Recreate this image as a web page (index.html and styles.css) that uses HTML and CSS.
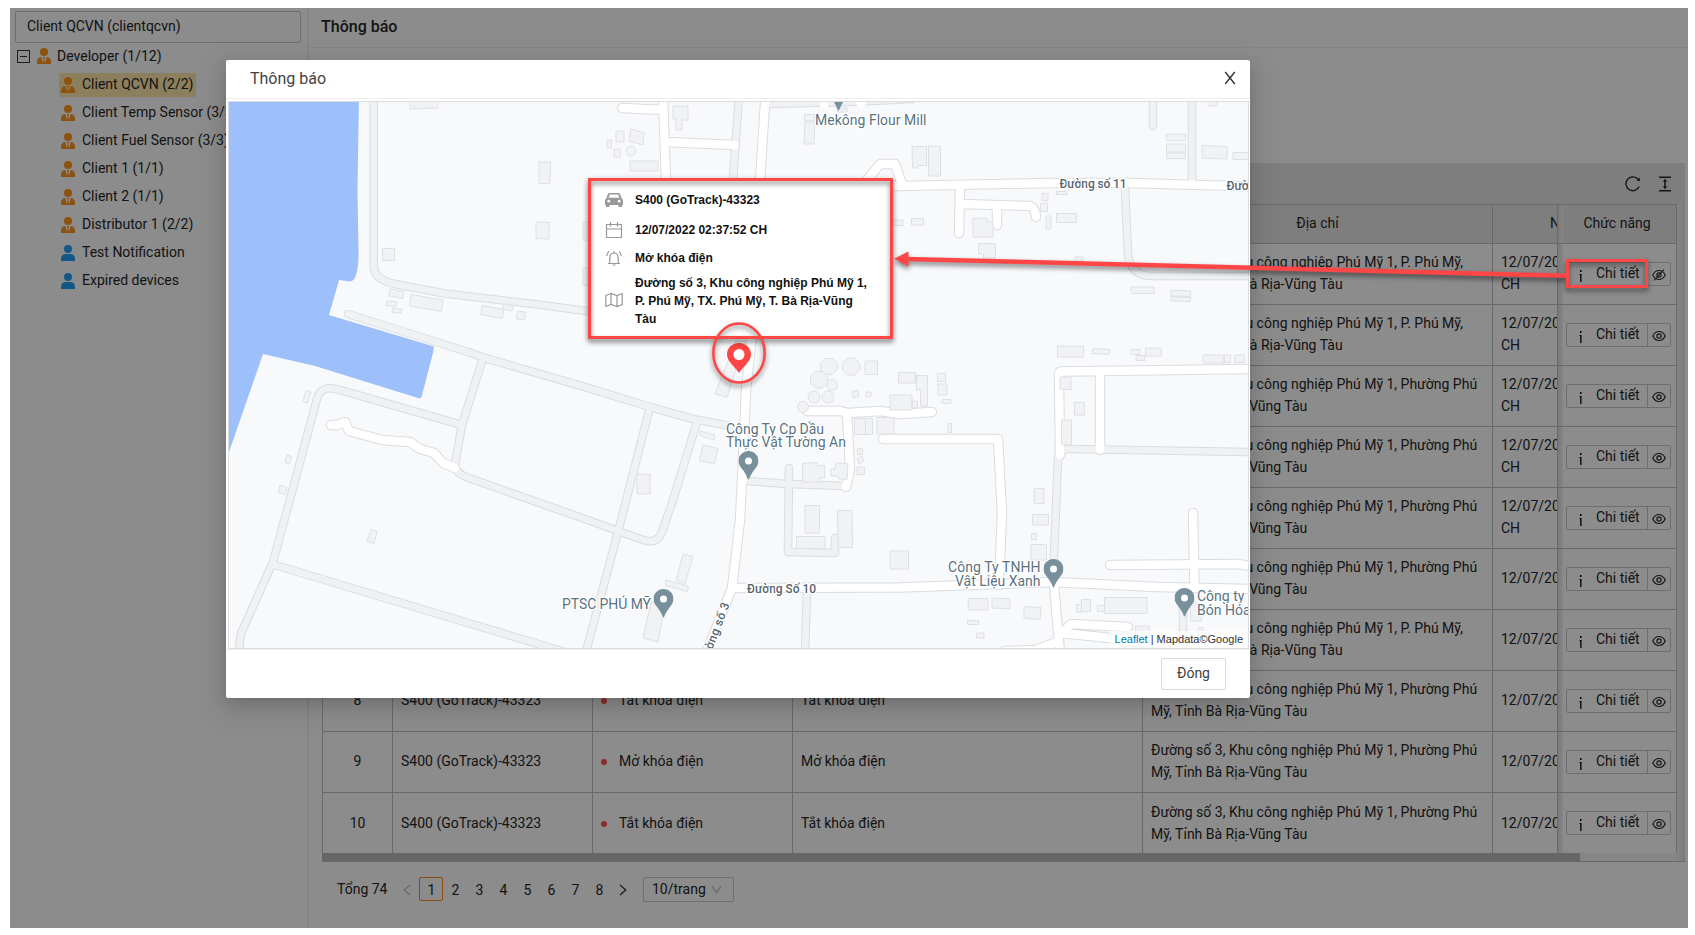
FILE: index.html
```html
<!DOCTYPE html>
<html lang="vi">
<head>
<meta charset="utf-8">
<title>Thông báo</title>
<link rel="stylesheet" href="styles.css">
</head>
<body>
<svg class="sprite" aria-hidden="true">
  <symbol id="tie" viewBox="0 0 14 16"><circle cx="7" cy="4" r="4"/><path d="M0 16v-2.200C0 10.800 2 9 4.300 9L6 15l.6-4L5.800 9h2.400l-.8 2L8 15l1.700-6C12 9 14 10.800 14 13.800V16z"/></symbol>
  <symbol id="user" viewBox="0 0 14 16"><circle cx="7" cy="4" r="4"/><path d="M0 16v-2.200C0 10.900 2 9 4.500 9h5C12 9 14 10.900 14 13.800V16z"/></symbol>
  <symbol id="eye" viewBox="0 0 14 12"><g fill="none" stroke="currentColor" stroke-width="1.200"><path d="M.8 6C2.200 3 4.300 1.500 7 1.500S11.800 3 13.200 6C11.800 9 9.700 10.500 7 10.500S2.200 9 .8 6z"/><circle cx="7" cy="6" r="2.100"/></g></symbol>
  <symbol id="eye-off" viewBox="0 0 14 12"><g fill="none" stroke="currentColor" stroke-width="1.100"><path d="M.8 6C2.200 3 4.300 1.500 7 1.500S11.800 3 13.200 6C11.800 9 9.700 10.500 7 10.500S2.200 9 .8 6z"/><circle cx="7" cy="6" r="2.100"/><path d="M2 11.300L12 .7"/></g></symbol>
  <symbol id="info" viewBox="0 0 4 12"><path d="M1 0h1.500v2H1zM.5 4h2v8H1.200V5H.5z"/></symbol>
  <symbol id="pin" viewBox="0 0 20 29"><path d="M10 0C4.400 0 0 4.400 0 10c0 3.600 2 6 4.300 9 2 2.600 4 5.500 5 8.800q.7 1.600 1.400 0c1-3.300 3-6.200 5-8.800C18 16 20 13.600 20 10 20 4.400 15.600 0 10 0z" fill="#78909c"/><circle cx="10" cy="10" r="3.500" fill="#fff"/></symbol>
</svg>

<div class="app">
  <aside class="sidebar">
    <div class="client-search">Client QCVN (clientqcvn)</div>
    <div class="tree-root"><span class="switcher"></span><svg class="node-icon"><use href="#tie"/></svg><span>Developer (1/12)</span></div>
    <ul class="tree">
      <li class="selected"><svg class="node-icon"><use href="#tie"/></svg>Client QCVN (2/2)</li>
      <li><svg class="node-icon"><use href="#tie"/></svg>Client Temp Sensor (3/3)</li>
      <li><svg class="node-icon"><use href="#tie"/></svg>Client Fuel Sensor (3/3)</li>
      <li><svg class="node-icon"><use href="#tie"/></svg>Client 1 (1/1)</li>
      <li><svg class="node-icon"><use href="#tie"/></svg>Client 2 (1/1)</li>
      <li><svg class="node-icon"><use href="#tie"/></svg>Distributor 1 (2/2)</li>
      <li><svg class="node-icon end-user"><use href="#user"/></svg>Test Notification</li>
      <li><svg class="node-icon end-user"><use href="#user"/></svg>Expired devices</li>
    </ul>
  </aside>

  <main class="content">
    <h1 class="page-title">Thông báo</h1>
    <div class="toolbar">
      <svg width="16" height="16" viewBox="0 0 16 16" fill="none" stroke="currentColor" stroke-width="1.400"><path d="M14.200 10.500A6.900 6.900 0 1 1 13.500 3.800"/><path d="M14.800 1.600V5.200L11.600 4.600z" fill="currentColor" stroke="none"/></svg>
      <svg width="14" height="16" viewBox="0 0 14 16" fill="none" stroke="currentColor" stroke-width="1.500"><path d="M1 1.200h12M1 14.800h12M7 4v8"/><path d="M7 2.800l2.200 3H4.800zM7 13.200l2.200-3H4.800z" fill="currentColor" stroke="none"/></svg>
    </div>
    <div class="table">
      <div class="row head"><div></div><div></div><div></div><div></div><div>Địa chỉ</div><div class="time">Ngày</div><div class="gap"></div><div class="act">Chức năng</div></div>
      <div class="row"><div class="num">1</div><div>S400 (GoTrack)-43323</div><div class="status">Mở khóa điện</div><div>Mở khóa điện</div><div>Đường số 3, Khu công nghiệp Phú Mỹ 1, P. Phú Mỹ, TX. Phú Mỹ, T. Bà Rịa-Vũng Tàu</div><div class="time">12/07/2022<br>CH</div><div class="gap"></div><div class="act"><span class="btn"><svg class="i"><use href="#info"/></svg>Chi tiết</span><span class="btn view"><svg class="eye"><use href="#eye-off"/></svg></span></div></div>
      <div class="row"><div class="num">2</div><div>S400 (GoTrack)-43323</div><div class="status">Tắt khóa điện</div><div>Tắt khóa điện</div><div>Đường số 3, Khu công nghiệp Phú Mỹ 1, P. Phú Mỹ, TX. Phú Mỹ, T. Bà Rịa-Vũng Tàu</div><div class="time">12/07/2022<br>CH</div><div class="gap"></div><div class="act"><span class="btn"><svg class="i"><use href="#info"/></svg>Chi tiết</span><span class="btn view"><svg class="eye"><use href="#eye"/></svg></span></div></div>
      <div class="row"><div class="num">3</div><div>S400 (GoTrack)-43323</div><div class="status">Mở khóa điện</div><div>Mở khóa điện</div><div>Đường số 3, Khu công nghiệp Phú Mỹ 1, Phường Phú Mỹ, Tỉnh Bà Rịa-Vũng Tàu</div><div class="time">12/07/2022<br>CH</div><div class="gap"></div><div class="act"><span class="btn"><svg class="i"><use href="#info"/></svg>Chi tiết</span><span class="btn view"><svg class="eye"><use href="#eye"/></svg></span></div></div>
      <div class="row"><div class="num">4</div><div>S400 (GoTrack)-43323</div><div class="status">Tắt khóa điện</div><div>Tắt khóa điện</div><div>Đường số 3, Khu công nghiệp Phú Mỹ 1, Phường Phú Mỹ, Tỉnh Bà Rịa-Vũng Tàu</div><div class="time">12/07/2022<br>CH</div><div class="gap"></div><div class="act"><span class="btn"><svg class="i"><use href="#info"/></svg>Chi tiết</span><span class="btn view"><svg class="eye"><use href="#eye"/></svg></span></div></div>
      <div class="row"><div class="num">5</div><div>S400 (GoTrack)-43323</div><div class="status">Mở khóa điện</div><div>Mở khóa điện</div><div>Đường số 3, Khu công nghiệp Phú Mỹ 1, Phường Phú Mỹ, Tỉnh Bà Rịa-Vũng Tàu</div><div class="time">12/07/2022<br>CH</div><div class="gap"></div><div class="act"><span class="btn"><svg class="i"><use href="#info"/></svg>Chi tiết</span><span class="btn view"><svg class="eye"><use href="#eye"/></svg></span></div></div>
      <div class="row"><div class="num">6</div><div>S400 (GoTrack)-43323</div><div class="status">Tắt khóa điện</div><div>Tắt khóa điện</div><div>Đường số 3, Khu công nghiệp Phú Mỹ 1, Phường Phú Mỹ, Tỉnh Bà Rịa-Vũng Tàu</div><div class="time">12/07/2022</div><div class="gap"></div><div class="act"><span class="btn"><svg class="i"><use href="#info"/></svg>Chi tiết</span><span class="btn view"><svg class="eye"><use href="#eye"/></svg></span></div></div>
      <div class="row"><div class="num">7</div><div>S400 (GoTrack)-43323</div><div class="status">Mở khóa điện</div><div>Mở khóa điện</div><div>Đường số 3, Khu công nghiệp Phú Mỹ 1, P. Phú Mỹ, TX. Phú Mỹ, T. Bà Rịa-Vũng Tàu</div><div class="time">12/07/2022</div><div class="gap"></div><div class="act"><span class="btn"><svg class="i"><use href="#info"/></svg>Chi tiết</span><span class="btn view"><svg class="eye"><use href="#eye"/></svg></span></div></div>
      <div class="row"><div class="num">8</div><div>S400 (GoTrack)-43323</div><div class="status">Tắt khóa điện</div><div>Tắt khóa điện</div><div>Đường số 3, Khu công nghiệp Phú Mỹ 1, Phường Phú Mỹ, Tỉnh Bà Rịa-Vũng Tàu</div><div class="time">12/07/2022</div><div class="gap"></div><div class="act"><span class="btn"><svg class="i"><use href="#info"/></svg>Chi tiết</span><span class="btn view"><svg class="eye"><use href="#eye"/></svg></span></div></div>
      <div class="row"><div class="num">9</div><div>S400 (GoTrack)-43323</div><div class="status">Mở khóa điện</div><div>Mở khóa điện</div><div>Đường số 3, Khu công nghiệp Phú Mỹ 1, Phường Phú Mỹ, Tỉnh Bà Rịa-Vũng Tàu</div><div class="time">12/07/2022</div><div class="gap"></div><div class="act"><span class="btn"><svg class="i"><use href="#info"/></svg>Chi tiết</span><span class="btn view"><svg class="eye"><use href="#eye"/></svg></span></div></div>
      <div class="row last"><div class="num">10</div><div>S400 (GoTrack)-43323</div><div class="status">Tắt khóa điện</div><div>Tắt khóa điện</div><div>Đường số 3, Khu công nghiệp Phú Mỹ 1, Phường Phú Mỹ, Tỉnh Bà Rịa-Vũng Tàu</div><div class="time">12/07/2022</div><div class="gap"></div><div class="act"><span class="btn"><svg class="i"><use href="#info"/></svg>Chi tiết</span><span class="btn view"><svg class="eye"><use href="#eye"/></svg></span></div></div>
      <div class="scrollbar"><div class="thumb"></div></div>
    </div>
    <div class="pagination">
      <span class="total">Tổng 74</span>
      <span class="page prev"><svg width="8" height="12" viewBox="0 0 8 12"><path d="M7 1L1.200 6 7 11"/></svg></span>
      <span class="page current">1</span><span class="page">2</span><span class="page">3</span><span class="page">4</span><span class="page">5</span><span class="page">6</span><span class="page">7</span><span class="page">8</span>
      <span class="page"><svg width="8" height="12" viewBox="0 0 8 12"><path d="M1 1l5.800 5L1 11"/></svg></span>
      <span class="page-size">10/trang<svg width="11" height="9" viewBox="0 0 11 9"><path d="M1 1l4.500 6.500L10 1"/></svg></span>
    </div>
  </main>
  <div class="mask"></div>
</div>

<div class="modal">
  <header class="modal-head"><span>Thông báo</span><svg width="12" height="14" viewBox="0 0 12 14"><path d="M1.200 1l9.600 12M10.800 1L1.200 13"/></svg></header>
  <div class="map">
    <svg class="map-canvas" viewBox="229 102 1019 546" width="1019" height="546">
      <defs>
        <g id="minor">
          <path d="M373.700 96V266Q374 280 395 284L445 293.500 542 305 600 313 690 332"/>
          <path d="M348 314L468 352 485 358 585 387 650 407 693 419 730 426"/>
          <path d="M483 358L462 425 455 464Q454 472 466 477L585 519 643 540Q657 545 662 532L673 500 697 422"/>
          <path d="M462 425L340 390Q321 384 317 399L273 562 243 629Q239 636 239.500 652"/>
          <path d="M275 565L545 646 565 652M650 407L618 532 586 652"/>
          <path d="M748 481L787 484 846 486M789 468L788 552 835 553V538M807 590L805 652"/>
          <path d="M739 96L733 180M766 104L850 102 912 99"/>
          <path d="M1153 96V126M1192 96V182M1125 186L1128 255Q1131 275 1150 276L1252 276"/>
          <path d="M1058 458L1053 580M1058 458Q1059 449 1070 449L1100 449.500 1252 452M1183 600V652"/>
        </g>
        <g id="major">
          <path d="M331 425L337 425 345 422 349 431 382 440 410 442 420 449 434 453 443 463 455 468"/>
          <path d="M663 96L666 182M622 108L663 110M667 142L735 145"/>
          <path d="M765.500 96L760 180 751 345 746 390 742 480 740 520 732 588 705 656"/>
          <path d="M867 180L880 164H895L902 184"/>
          <path d="M850 187L900 186 1050 183 1130 183 1252 186.500M960 187L959 233M960 204L1030 206Q1035 207 1036 217M997 206V225"/>
          <path d="M1252 369L1062 371.500Q1058 371 1059 377L1060 455M1100 371V450"/>
          <path d="M883 439H998L1002 513 999 585M807 411H840L848 413 880 411 900 414 932 412M847 413L850 470 846 487"/>
          <path d="M732 588L900 587.500 1053 582 1157 587 1252 589"/>
          <path d="M1110 565L1240 564 1252 567M1193 513L1194.500 588M1054 584L1057 620 1060 652"/>
          <path d="M1061 634L1071 624 1128 627M1061 633L1110 638 1135 642M1059 641L1036 650 1005 651"/>
        </g>
      </defs>
      <path d="M220 96H359L357.500 190 358.600 255Q358 281 350 281.500L339 280 329 315 434 346.500 433 353 421.500 397Q421 399 418 398L315 366 263 354 220 478z" fill="#9dc0fa"/>
      <g class="casing minor"><use href="#minor"/></g>
      <g class="casing major"><use href="#major"/></g>
      <g class="bed minor"><use href="#minor"/></g>
      <g class="bed major"><use href="#major"/></g>
      <circle cx="824" cy="104" r="4.500" fill="#fff"/><circle cx="861" cy="103" r="4.500" fill="#fff"/>
      <g class="building">
        <path d="M410 96H438V108L410 109zM539 162h11.500v12H550v9.500H539zM536 222l13 .5V239l-13-.5zM382.500 248.500h12v12h-12zM390 289l14 2.500-1 7-14-2.500zM411 294.500l32 5.500-1.500 11.500-32-5.500zM387 301l10 1-1 4.500-10-1zM393 308l9 1.500-1 4-9-1.500zM482 305.500l22 4-2 9-21-4zM504 304l9 2-1 5-10-2zM517.500 311l8 1-1 8-8-1z"/>
        <path d="M306 390.500l5 1.500-3.500 11-4.500-1.500zM287 455l4.500 1.500-2.500 7.500-4-1.500zM280 485l7 2.500-2 7-6.500-2zM371 529.500l6 2-3 12-7-2z"/>
        <path d="M673 106h15v14h-6v10h-6V119h-3zM616 131h8v11h-8zM631 129l13 4-1 12-14-4zM607 140h4.500v8H607zM614 149h6v8h-6zM630 161h28v10h-28zM804.500 114.500h10v6h-10zM805 122h10l-1 22h-10zM837 108h10v4h-10z"/>
        <circle cx="631" cy="151" r="5"/>
        <path d="M583 222h9v18h-9zM583 268h9v17h-9zM889 220h14v5.500h-14zM912 146.500h14.500v19H918V168h-5.500zM928.500 146h12v30h-12zM911.500 218.500h12v6.500h-12z"/>
        <path d="M973 218h14l1 4h5v15h-20zM978.500 243.500h17v14.500h-12v-4h-5zM1042 193.500h6v7.500h-6zM1040.500 203.500h7v8h-7zM1046 216h5v13h-5zM1056.500 191.500h10v3h-10zM1056.500 213.500h20v9h-20zM1075 257h8v4h-8z"/>
        <path d="M1166.500 134h19v6.500h-19zM1166.500 144h19v8h-19zM1166.500 153h19v5.500h-19zM1202 145.500l25 1V159l-25-1zM1208 96h9v10h-9zM1233 152.500h20v7h-20z"/>
        <path d="M1131 287h23v6.500h-23zM1171 290l20 1-1 5.500-19-.5zM1171 296.500l20 1-1 4-19-.5zM1057.500 346h26v11h-26zM1093 348.500l17 1-1 5-17-1zM1131 349.500h9v5h-9zM1136 355.500h9v5h-9zM1145.500 348h16v8h-16zM1203 355h21v8h-21zM1224 355h6.500v7.500H1224zM1234.500 355h10v7.500h-10z"/>
        <path d="M820.500 363.500l5-5h7l5 5v6l-5 5h-7l-5-5zM842.500 363.500l5-5.500h7l5.500 6v6l-5.500 5h-7l-5-5zM810.500 377l5-5.500h7l5.500 5.500v6l-5.500 5h-7l-5-5z"/>
        <circle cx="832" cy="385" r="5.500"/><circle cx="814" cy="397" r="6"/><circle cx="828" cy="397" r="6"/><circle cx="803" cy="407" r="5.500"/>
        <path d="M865 361h12.500v13.500H865zM852 391.500l6-1 1 6-6 1zM866 392l5 0v5l-5 0zM898.500 372.500h17V383h-17zM916.500 375.500h11V406h-7v-16h-4zM890 395h22v15h-22zM912 401h5.500v7H912zM937.500 373.500h8v8h-8zM938 384h9v11h-9zM942 399.500h9v4h-9zM948 423.500h3.500v9H948zM854.500 418.500h11v16h-11zM865.500 418.500h7v16h-7zM877 417.500h17V434h-17z"/>
        <path d="M857 449l5-1 1 6-5 1zM857 459l5-3 2 5-5 3zM857 467h7.500v7.500H857zM802.500 463.500l15-1v3h7v12.500h-5v4h-17zM836 463l12 .5-1 16-8-.5-1-3h-7v-7h4z"/>
        <path d="M736 341H745L727 397 715 394zM700 431l15 4-1 5-14-4zM703 445l15 3.500-3.500 15.500-15-3.500zM637 474h13v20h-13zM805 505.500h14.500V533H805zM837.500 510.500h14.500L852.500 547.500h-14.500zM796.500 536.500h28.500v12h-28.500zM890 551h18.500v18H890zM683 554l10 2.500-8 27-9-3zM665.500 580l23 6-1 5.500-22-6zM651 602l14 3-7 37-15-4z"/>
        <path d="M1060 377h11v12.500h-11zM1061.500 420h10v25h-10zM1074.500 402.500h10V415h-10zM1034 488.500h10v15h-10zM1032.500 514.500h16V525h-16zM1031.500 533.500h5v6h-5zM1031 544.500h15.500V560H1031zM968.500 598.500h19.500v11.500h-20zM992 598l18 1v10l-18-1zM1024 606.500l17 1-1 12-16-1zM967.500 620.500h11v4h-11zM976.500 633h7.500v5h-7.500zM1076.500 604.500h5v8h-5zM1081.500 599.500h9v12h-9zM1097.500 605.500h7v6h-7zM1104.500 597.500h42.500v16h-42.500zM1135.500 626h14v18h-14zM1190.500 603h11v18h-11zM1198 627.500h5v10h-5z"/>
      </g>
      <path d="M834 102h9l-4.500 9z" fill="#78909c"/>
      <use href="#pin" x="738.500" y="451" width="20" height="29"/><use href="#pin" x="653.500" y="589" width="20" height="29"/><use href="#pin" x="1043.500" y="559" width="20" height="29"/><use href="#pin" x="1174.500" y="588" width="20" height="29"/>
      <g class="place">
        <text x="815" y="125" textLength="111.500">Mekông Flour Mill</text>
        <text x="726" y="433.500" textLength="98">Công Ty Cp Dầu</text><text x="726" y="447" textLength="120">Thực Vật Tường An</text>
        <text x="562" y="609" textLength="89">PTSC PHÚ MỸ</text>
        <text x="948" y="572" textLength="92.500">Công Ty TNHH</text><text x="955" y="586" textLength="85.500">Vật Liệu Xanh</text>
        <text x="1197" y="601">Công ty</text><text x="1197" y="615">Bón Hóa</text>
      </g>
      <g class="street">
        <text x="747" y="593" textLength="69">Đường Số 10</text><text x="1059.500" y="188" textLength="67">Đường số 11</text><text x="1226.500" y="189.500">Đường số 11</text>
        <text transform="translate(706.500 665) rotate(-69)" textLength="65">Đường số 3</text>
      </g>
    </svg>
    <div class="attribution"><a>Leaflet</a> | Mapdata©Google</div>
    <svg class="marker" width="24" height="30" viewBox="0 0 24 30"><path d="M12 0C5 0 0 5 0 11.600 0 18 6 22 12 30c6-8 12-12 12-18.400C24 5 19 0 12 0z" fill="#ff4646"/><circle cx="12" cy="11.500" r="5.500" fill="#fff"/></svg>
    <div class="popup">
      <div class="line"><svg viewBox="0 0 18 16"><path d="M4.500 1h9Q15 1 15.500 3L16.500 6Q18 7 18 9v4h-1v2h-3.500v-2h-9v2H1v-2H0V9Q0 7 1.500 6L2.500 3Q3 1 4.500 1z" fill="#999" stroke="none"/><path d="M4.800 2.500h8.400l1.200 3.200H3.600z" fill="#fff" stroke="none"/><circle cx="3.800" cy="9.200" r="1.400" fill="#fff" stroke="none"/><circle cx="14.200" cy="9.200" r="1.400" fill="#fff" stroke="none"/></svg>S400 (GoTrack)-43323</div>
      <div class="line"><svg viewBox="0 0 18 16"><path d="M1.500 2.500h15v13h-15zM1.500 7h15M5.500 0v4.500M12.500 0v4.500"/></svg>12/07/2022 02:37:52 CH</div>
      <div class="line"><svg viewBox="0 0 18 16"><path d="M3 13.500h12M4.500 13.500L5 6.500Q5.500 3 9 3T13 6.500L13.500 13.500M9 3V1M7.500 15h3M4 1.500Q2 3 1.800 6M14 1.500Q16 3 16.200 6"/></svg>Mở khóa điện</div>
      <div class="line addr"><svg viewBox="0 0 18 16"><path d="M.8 3.500L6 1.500l6 2 5.200-2V12.500L12 14.500l-6-2-5.200 2zM6 1.500v11M12 3.500v11"/></svg><span>Đường số 3, Khu công nghiệp Phú Mỹ 1,<br>P. Phú Mỹ, TX. Phú Mỹ, T. Bà Rịa-Vũng<br>Tàu</span></div>
    </div>
  </div>
  <footer class="modal-foot"><span class="close-btn">Đóng</span></footer>
</div>

<svg class="callouts" width="1695" height="935" viewBox="0 0 1695 935">
  <g fill="none" stroke="#ff4646" stroke-width="3">
    <rect x="589.500" y="179.500" width="302" height="158"/>
    <rect x="1567.500" y="260.500" width="79" height="26"/>
    <ellipse cx="739" cy="353" rx="25.700" ry="29.500" stroke-width="2.500"/>
    <path d="M905 259L1567 275.700" stroke-width="4.500"/>
    <path d="M894 258.700L908.500 251.500V266.500z" fill="#ff4646" stroke="none"/>
  </g>
</svg>
</body>
</html>
```

FILE: styles.css
```css
* { box-sizing: border-box; }
body {
  margin: 0;
  padding: 8px 7px 7px 10px;
  width: 1695px;
  height: 935px;
  overflow: hidden;
  background: #fff;
  color: #262626;
  font: 14px/22px Roboto, "Noto Sans", sans-serif;
}
.sprite { position: absolute; width: 0; height: 0; }

.app {
  position: relative;
  display: flex;
  width: 1678px;
  height: 920px;
  overflow: hidden;
  background: #fff;
}
.mask { position: absolute; inset: 0; background: rgba(0, 0, 0, .45); }

.sidebar {
  flex: none;
  width: 299px;
  padding: 3px 6px 0 5px;
  border-right: 2px solid #f0f0f0;
}
.client-search {
  height: 32px;
  padding: 3px 11px;
  border: 1px solid #c8c8c8;
  border-radius: 2px;
}
.tree-root {
  display: flex;
  align-items: center;
  height: 24px;
  margin-top: 1px;
  padding-left: 2px;
}
.switcher {
  width: 13px;
  height: 13px;
  margin-right: 7px;
  border: 1px solid #333;
  background: linear-gradient(#333, #333) center / 7px 1px no-repeat;
}
.node-icon { flex: none; width: 14px; height: 16px; margin-right: 6px; fill: #ff971c; }
.node-icon.end-user { fill: #22a0f5; }
.tree { margin: 5px 0 0 44px; padding: 0; list-style: none; }
.tree li {
  display: flex;
  align-items: center;
  width: max-content;
  height: 24px;
  margin-bottom: 4px;
  padding: 0 3px 2px 2px;
  border-radius: 2px;
  line-height: 20px;
  white-space: nowrap;
}
.tree .node-icon { margin: 1px 7px 0 0; }
.tree .selected { background: #ffe7ab; }

.content { flex: 1; min-width: 0; padding-right: 3px; }
.page-title {
  height: 40px;
  margin: 0 -3px 115px 0;
  padding: 7px 12px;
  border-bottom: 1px solid #f0f0f0;
  font-size: 16px;
  font-weight: 500;
  line-height: 24px;
}
.toolbar {
  display: flex;
  align-items: center;
  justify-content: flex-end;
  gap: 17px;
  height: 41px;
  margin-left: 13px;
  padding: 1px 13px 0 0;
  background: #e6e6e6;
}
.table {
  margin-left: 13px;
  padding-top: 1px;
  background: linear-gradient(#c0c0c0, #c0c0c0) 0 0 / 1355px 1px no-repeat,
    linear-gradient(90deg, #f2f2f2, #e0e0e0) 100% 0 / 8px 100% no-repeat;
  border-bottom: 1px solid #c0c0c0;
}
.row {
  display: grid;
  grid-template-columns: 70px 200px 200px 350px 350px 65px 5px 114px;
  width: 1355px;
  height: 61px;
  border-left: 1px solid #c0c0c0;
  background: #fff;
}
.row > div {
  display: flex;
  align-items: center;
  padding: 0 8px 2px;
  border-right: 1px solid #c0c0c0;
  border-bottom: 1px solid #c0c0c0;
}
.row.last { height: 60px; }
.row.last > div { border-bottom: 0; padding-bottom: 1px; }
.row.head { height: 39px; background: #e6e6e6; }
.row.head > div { justify-content: center; }
.row > .num { justify-content: center; }
.row > .time { padding-right: 0; overflow: hidden; white-space: nowrap; }
.row.head > .time { justify-content: flex-start; padding-left: 57px; }
.row > .gap { padding: 0; border-right: 0; background: linear-gradient(90deg, #dcdcdc, #f4f4f4); }
.row > .act { padding: 0 4px 0 3px; }
.row.head > .act { padding: 0 8px 2px 3px; }
.status::before {
  content: "";
  width: 6px;
  height: 6px;
  margin: 2px 12px 0 0;
  border-radius: 50%;
  background: #ff4d4f;
}
.btn {
  display: flex;
  width: 82px;
  height: 24px;
  padding-left: 12px;
  border: 1px solid #c8c8c8;
  border-radius: 2px 0 0 2px;
  line-height: 21px;
}
.i { width: 4px; height: 12px; margin: 7px 13px 0 0; }
.btn.view { width: 24px; margin-left: -1px; padding: 6px 0 0 4px; border-radius: 0 2px 2px 0; }
.eye { width: 14px; height: 12px; }
.scrollbar { width: 1355px; height: 8px; background: #f4f4f4; }
.thumb { width: 1258px; height: 8px; background: #bababa; }

.pagination {
  display: flex;
  align-items: center;
  height: 24px;
  margin: 15px 0 0 28px;
}
.total { width: 58px; line-height: 22px; }
.page {
  display: flex;
  align-items: center;
  justify-content: center;
  width: 24px;
  height: 24px;
  padding: 2px 0 0 1px;
}
.page svg, .page-size svg { fill: none; stroke: #333; stroke-width: 1.3; }
.page svg { margin-right: 1px; }
.page.prev svg, .page-size svg { stroke: #bfbfbf; }
.page.current { border: 1px solid #fa8c16; border-radius: 2px; }
.page-size {
  display: flex;
  align-items: center;
  justify-content: space-between;
  width: 91px;
  height: 25px;
  margin: 1px 0 0 8px;
  padding: 0 11px 2px 8px;
  border: 1px solid #c8c8c8;
  border-radius: 2px;
}
.page-size svg { margin-top: 2px; }

.modal {
  position: absolute;
  left: 226px;
  top: 60px;
  width: 1024px;
  height: 638px;
  border-radius: 2px;
  background: #fff;
  box-shadow: 0 3px 6px -4px rgba(0, 0, 0, .12), 0 6px 16px rgba(0, 0, 0, .12), 0 9px 28px 8px rgba(0, 0, 0, .08);
}
.modal-head {
  display: flex;
  align-items: center;
  justify-content: space-between;
  height: 39px;
  padding: 0 14px 1px 24px;
  border-bottom: 1px solid #ececec;
  color: #434343;
  font-size: 16px;
}
.modal-head svg { margin-bottom: 1px; fill: none; stroke: #333; stroke-width: 1.4; }
.map {
  position: relative;
  width: 1021px;
  height: 548px;
  margin: 2px 0 0 2px;
  border: 1px solid #d9dde0;
  background: #f8f9fb;
  overflow: hidden;
}
.map-canvas { display: block; }
.casing, .bed { fill: none; stroke-linecap: round; stroke-linejoin: round; }
.casing { stroke: #dadce0; }
.casing.minor { stroke-width: 8.600px; }
.casing.major { stroke-width: 10.400px; }
.bed.minor { stroke: #f0f1f3; stroke-width: 6.600px; }
.bed.major { stroke: #fff; stroke-width: 8.400px; }
.building { fill: #f1f2f4; stroke: #dfe0e4; stroke-width: 1px; }
.place text, .street text { paint-order: stroke; stroke: #fff; stroke-width: 2.500px; stroke-linejoin: round; fill: #5a7381; font-size: 14px; }
.street text { fill: #56646d; font-size: 12px; font-weight: 500; }
.attribution {
  position: absolute;
  right: 0;
  bottom: 0;
  padding: 0 5px 1px;
  background: rgba(255, 255, 255, .7);
  color: #333;
  font: 11px/16px "Liberation Sans", Arial, sans-serif;
}
.attribution a { color: #0078a8; }
.marker { position: absolute; left: 498px; top: 241px; }
.popup {
  position: absolute;
  left: 361px;
  top: 77px;
  display: flex;
  flex-direction: column;
  width: 301px;
  height: 159px;
  padding: 12px 14px 0 15px;
  border-radius: 2px;
  background: #fff;
  color: #111;
  font: bold 12px/18px "Liberation Sans", Arial, sans-serif;
  box-shadow: 0 2px 8px rgba(0, 0, 0, .2);
}
.line { display: flex; align-items: center; height: 18px; margin-bottom: 12px; white-space: nowrap; }
.line svg { flex: none; width: 18px; height: 16px; margin-right: 12px; fill: none; stroke: #999; stroke-width: 1.200; }
.line:nth-child(2) { margin-bottom: 10px; }
.line:nth-child(3) { margin-bottom: 7px; }
.line.addr { height: 54px; }
.line.addr svg { margin-bottom: 3px; }
.modal-foot {
  display: flex;
  justify-content: flex-end;
  padding: 8px 24px 0 0;
  border-top: 1px solid #ececec;
}
.close-btn {
  width: 65px;
  height: 32px;
  border: 1px solid #d9d9d9;
  border-radius: 2px;
  color: #434343;
  line-height: 29px;
  text-align: center;
}
.callouts {
  position: absolute;
  left: 0;
  top: 0;
  filter: drop-shadow(0 3px 2.500px rgba(0, 0, 0, .5));
  pointer-events: none;
}
```
